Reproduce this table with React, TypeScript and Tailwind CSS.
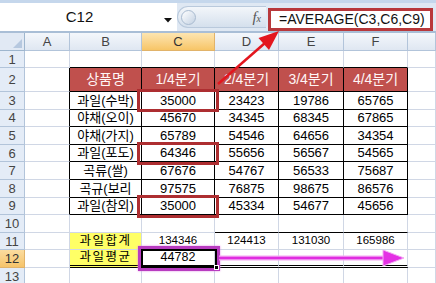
const table = [
  ["과일(수박)", "35000", "23423", "19786", "65765"],
  ["야채(오이)", "45670", "34345", "68345", "67865"],
  ["야채(가지)", "65789", "54546", "64656", "34354"],
  ["과일(포도)", "64346", "55656", "56567", "54565"],
  ["곡류(쌀)", "67676", "54767", "56533", "75687"],
  ["곡규(보리", "97575", "76875", "98675", "86576"],
  ["과일(참외)", "35000", "45334", "54677", "45656"],
];

const header = ["상품명", "1/4분기", "2/4분기", "3/4분기", "4/4분기"];
const totals = ["134346", "124413", "131030", "165986"];
const letters = ["A", "B", "C", "D", "E", "F", ""];
const rows = [1, 2, 3, 4, 5, 6, 7, 8, 9, 10, 11, 12, 13];

const inTable = (r: number, c: number) => r >= 2 && r <= 9 && c >= 1 && c <= 5;

function cellText(r: number, c: number): string {
  if (r === 2 && c >= 1 && c <= 5) return header[c - 1];
  if (r >= 3 && r <= 9 && c >= 1 && c <= 5) return table[r - 3][c - 1];
  if (r === 11 && c === 1) return "과일합계";
  if (r === 11 && c >= 2 && c <= 5) return totals[c - 2];
  if (r === 12 && c === 1) return "과일평균";
  if (r === 12 && c === 2) return "44782";
  return "";
}

function Cell({ r, c }: { r: number; c: number }) {
  const rightBlack = inTable(r, c) || inTable(r, c + 1);
  const bottomBlack = inTable(r, c) || inTable(r + 1, c) || (r === 10 && c >= 3 && c <= 5);
  const doubleBottom = r === 12 && c >= 1 && c <= 5;

  let bg = "";
  let text = "text-[13px]";
  if (r === 2 && inTable(r, c)) {
    bg = "bg-[#c0504d]";
    text = "text-[14px] text-[#fff5f5]";
  } else if ((r === 11 || r === 12) && c === 1) {
    bg = "bg-[#ffff66]";
    text = "text-[12.5px] tracking-[1.5px]";
  } else if (r === 11) {
    text = "text-[11.5px]";
  } else if (r === 12) {
    text = "text-[12.5px]";
  }

  return (
    <div
      className={`flex items-center justify-center overflow-hidden whitespace-nowrap border-r border-b ${bg} ${text} ${
        rightBlack ? "border-r-black" : "border-r-[#d0d7e5]"
      } ${
        doubleBottom
          ? "border-b-[3px] border-b-black border-double"
          : bottomBlack
          ? "border-b-black"
          : "border-b-[#d0d7e5]"
      }`}
    >
      {cellText(r, c)}
    </div>
  );
}

function FormulaBar() {
  return (
    <div className="h-[33px] flex flex-col">
      <div className="h-[3px] bg-[#c5d7ec]" />
      <div className="h-[28px] flex bg-[#dfe8f3]">
        <div className="w-[177px] bg-white relative flex items-center">
          <span className="w-[159px] text-center text-[15px] text-[#111]">C12</span>
          <svg className="absolute left-[164px] top-[15px]" width="8" height="5" viewBox="0 0 8 5">
            <polygon points="0,0 8,0 4,4.5" fill="#111" />
          </svg>
        </div>
        <div className="w-[89px] h-[22px] self-center flex items-center rounded-l-full border border-r-0 border-[#b9c9dc] bg-linear-to-b from-[#f3f6fa] to-[#d5e0ed]">
          <div className="ml-[3px] w-[15px] h-[15px] rounded-full border border-[#a9bbd0] bg-linear-to-br from-white to-[#c4d2e3]" />
          <span className="ml-auto mr-[5px] italic text-[#555] [font-family:'Liberation_Serif',serif] text-[15px] leading-none">
            f<span className="text-[10px]">x</span>
          </span>
        </div>
        <div className="ml-[2px] mt-[5px] w-[165px] h-[23px] border-[3px] border-[#b8383b] bg-white flex items-center pl-[8px] text-[14px] text-[#111]">
          =AVERAGE(C3,C6,C9)
        </div>
      </div>
      <div className="h-[2px] bg-[#a9bed6]" />
    </div>
  );
}

function Sheet() {
  return (
    <div className="grid h-[250px] grid-cols-[25px_45px_72px_73px_64px_65px_64px_1fr] grid-rows-[18px_17px_24px_repeat(10,17.6px)_1fr]">
      <div className="relative border-r border-b border-[#9eb6ce] bg-[#e1e9f4]">
        <svg className="absolute right-[2px] bottom-[2px]" width="9" height="9" viewBox="0 0 9 9">
          <polygon points="9,0 9,9 0,9" fill="#b6c8df" />
        </svg>
      </div>
      {letters.map((l, i) => (
        <div
          key={i}
          className={`flex items-center justify-center border-r border-b text-[13px] ${
            i === 2
              ? "bg-linear-to-b from-[#fde5b0] to-[#f7c566] border-[#e1b36a] text-[#333]"
              : "bg-linear-to-b from-[#f4f7fb] to-[#dfe7f2] border-[#b2c4da] text-[#444]"
          }`}
        >
          {l}
        </div>
      ))}
      {rows.map((r) => (
        <Row key={r} r={r} />
      ))}
    </div>
  );
}

function Row({ r }: { r: number }) {
  return (
    <>
      <div
        className={`flex justify-center border-r border-b text-[13px] leading-none ${
          r === 13 ? "items-start pt-[2px]" : "items-center"
        } ${
          r === 12
            ? "bg-linear-to-b from-[#fbdc9f] to-[#f6c46a] border-[#e1b36a] text-[#333]"
            : "bg-[#e4ecf7] border-[#b2c4da] text-[#444]"
        }`}
      >
        {r}
      </div>
      {letters.map((_, c) => (
        <Cell key={c} r={r} c={c} />
      ))}
    </>
  );
}

function Overlays() {
  return (
    <>
      <div className="absolute left-[137px] top-[89px] w-[82px] h-[23px] border-[3px] border-[#ad2e31]" />
      <div className="absolute left-[137px] top-[142px] w-[82px] h-[23px] border-[3px] border-[#ad2e31]" />
      <div className="absolute left-[137px] top-[195px] w-[82px] h-[23px] border-[3px] border-[#ad2e31]" />
      <div className="absolute left-[138px] top-[246px] w-[82px] h-[25px] border-[3px] border-[#b83cc0] shadow-[0_0_2px_#e48ee8]">
        <div className="relative h-full w-full border-2 border-black">
          <div className="absolute right-[-4px] bottom-[-4px] w-[5px] h-[5px] bg-black border border-white" />
        </div>
      </div>
      <svg className="absolute left-0 top-0 pointer-events-none" width="436" height="283" viewBox="0 0 436 283">
        <line x1="218" y1="84" x2="265" y2="43" stroke="#e3161e" strokeWidth="2.5" />
        <polygon points="279,31 269,50 258.5,38" fill="#e3161e" />
        <line x1="219" y1="258" x2="388" y2="258" stroke="#f3a8f3" strokeWidth="5" />
        <line x1="219" y1="258" x2="388" y2="258" stroke="#e02ce0" strokeWidth="2.5" />
        <polygon points="383,250 404,258 383,266" fill="#e430e4" stroke="#f3a8f3" strokeWidth="1" />
      </svg>
    </>
  );
}

export default function App() {
  return (
    <div className="relative w-[436px] h-[283px] overflow-hidden bg-white text-black [font-family:'Liberation_Sans','Noto_Sans_CJK_KR',sans-serif]">
      <FormulaBar />
      <Sheet />
      <Overlays />
    </div>
  );
}
